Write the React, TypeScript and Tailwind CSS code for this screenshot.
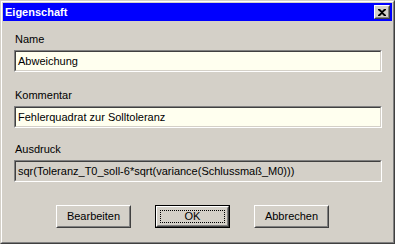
import type { ReactNode } from 'react'

const font = { fontFamily: '"Liberation Sans", Arial, sans-serif' }

function Field({ label, value, readOnly, className }: { label: string; value: string; readOnly?: boolean; className?: string }) {
  return (
    <div className={className}>
      <div className="mb-[4px] h-[13px] pl-[1px] text-[11px] leading-[13px] text-black">{label}</div>
      <div className="border border-t-[#808080] border-l-[#808080] border-r-white border-b-white">
        <div
          className={
            'h-[20px] border border-t-[#404040] border-l-[#404040] border-r-[#d4d0c8] border-b-[#d4d0c8] pl-[2px] text-[11px] leading-[18px] text-black ' +
            (readOnly ? 'bg-[#d4d0c8]' : 'bg-[#ffffef]')
          }
        >
          {value}
        </div>
      </div>
    </div>
  )
}

function Button({ children, def }: { children: ReactNode; def?: boolean }) {
  if (def) {
    return (
      <div className="h-[23px] w-[75px] border border-black">
        <div className="h-full border border-t-white border-l-white border-r-[#404040] border-b-[#404040]">
          <div className="flex h-full items-center justify-center border border-t-[#d4d0c8] border-l-[#d4d0c8] border-r-[#808080] border-b-[#808080] p-[2px]">
            <div className="flex h-full w-full items-center justify-center border border-dotted border-black text-[11px] leading-none">
              {children}
            </div>
          </div>
        </div>
      </div>
    )
  }
  return (
    <div className="h-[23px] w-[75px] border border-t-white border-l-white border-r-[#404040] border-b-[#404040]">
      <div className="flex h-full items-center justify-center border border-t-[#d4d0c8] border-l-[#d4d0c8] border-r-[#808080] border-b-[#808080] text-[11px] leading-none">
        {children}
      </div>
    </div>
  )
}

export default function App() {
  return (
    <div style={font} className="h-[244px] w-[395px] bg-[#d4d0c8]">
      <div className="h-full border border-t-[#d4d0c8] border-l-[#d4d0c8] border-r-[#404040] border-b-[#404040]">
        <div className="flex h-full flex-col border border-t-white border-l-white border-r-[#808080] border-b-[#808080] p-[1px]">
          <div className="flex h-[18px] items-center justify-between bg-[#0000ff] pl-[2px] pr-[2px]">
            <span className="text-[11px] font-bold leading-none text-white">Eigenschaft</span>
            <div className="h-[14px] w-[16px] border border-t-white border-l-white border-r-[#404040] border-b-[#404040]">
              <div className="flex h-full items-center justify-center border border-t-[#d4d0c8] border-l-[#d4d0c8] border-r-[#808080] border-b-[#808080] bg-[#d4d0c8]">
                <svg width="8" height="7" viewBox="0 0 8 7">
                  <path d="M0 0h2l2 2 2-2h2v1L5 3.5 8 6v1H6L4 5 2 7H0V6l3-2.5L0 1z" fill="#000" />
                </svg>
              </div>
            </div>
          </div>
          <div className="flex flex-1 flex-col pl-[11px] pr-[10px] pt-[12px]">
            <Field label="Name" value="Abweichung" />
            <Field className="mt-[17px]" label="Kommentar" value="Fehlerquadrat zur Solltoleranz" />
            <Field className="mt-[15px]" label="Ausdruck" value="sqr(Toleranz_T0_soll-6*sqrt(variance(Schlussmaß_M0)))" readOnly />
            <div className="mt-[23px] flex gap-[24px] pl-[42px]">
              <Button>Bearbeiten</Button>
              <Button def>OK</Button>
              <Button>Abbrechen</Button>
            </div>
          </div>
        </div>
      </div>
    </div>
  )
}
